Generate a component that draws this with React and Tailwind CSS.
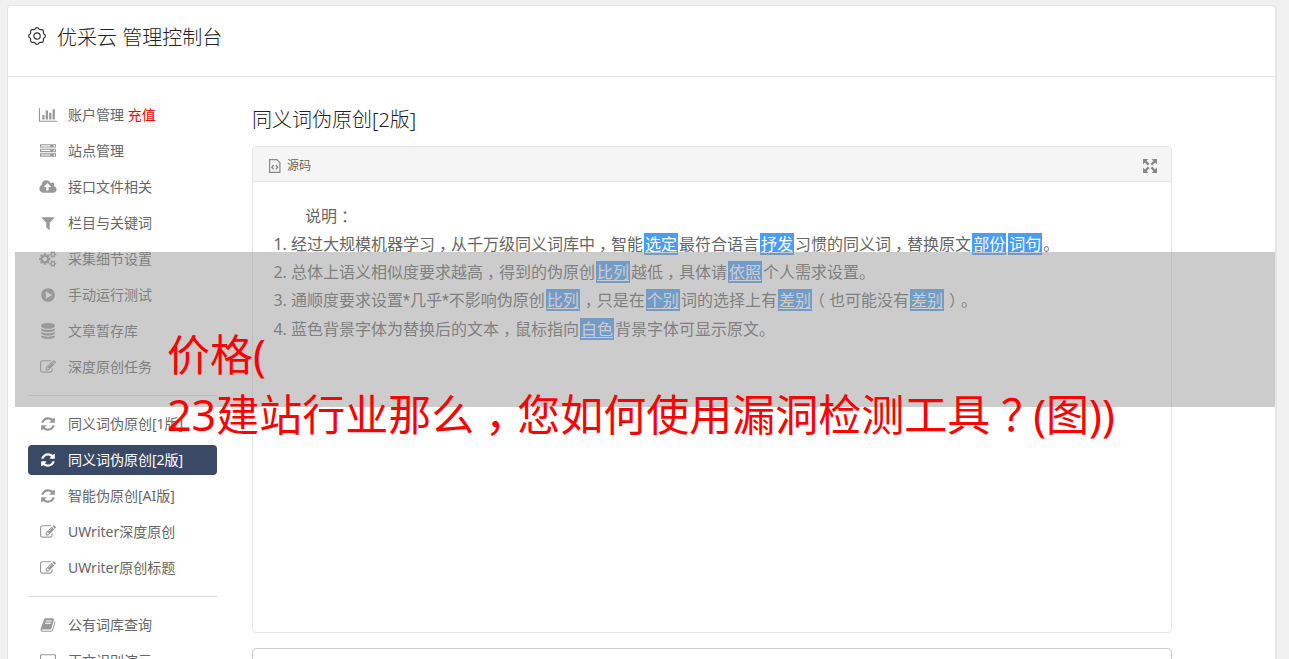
const PATHS = {
  chart: ['0 0 2048 1792', 'M640 896v512h-256v-512h256zm384-512v1024h-256v-1024h256zm1024 1152v128h-2048v-1536h128v1408h1920zm-640-896v768h-256v-768h256zm384-384v1152h-256v-1152h256z'],
  server: ['0 0 1792 1792', 'M128 1408h1024v-128h-1024v128zm0-512h1024v-128h-1024v128zm1568 448q0-40-28-68t-68-28-68 28-28 68 28 68 68 28 68-28 28-68zm-1568-960h1024v-128h-1024v128zm1568 448q0-40-28-68t-68-28-68 28-28 68 28 68 68 28 68-28 28-68zm0-512q0-40-28-68t-68-28-68 28-28 68 28 68 68 28 68-28 28-68zm96 832v384h-1792v-384h1792zm0-512v384h-1792v-384h1792zm0-512v384h-1792v-384h1792z'],
  cloud: ['-128 0 2048 1792', 'M1216 864q0-14-9-23l-352-352q-9-9-23-9t-23 9l-351 351q-10 12-10 24 0 14 9 23t23 9h224v352q0 13 9.5 22.5t22.5 9.5h192q13 0 22.5-9.5t9.5-22.5v-352h224q13 0 22.5-9.5t9.5-22.5zm640 288q0 159-112.5 271.5t-271.5 112.5h-1088q-185 0-316.5-131.5t-131.5-316.5q0-130 70-240t188-165q-2-30-2-43 0-212 150-362t362-150q156 0 285.5 87t188.5 231q71-62 166-62 106 0 181 75t75 181q0 76-41 138 130 31 213.5 135.5t83.5 238.5z'],
  filter: ['0 0 1792 1792', 'M1595 295q17 41-14 70l-493 493v742q0 42-39 59-13 5-25 5-27 0-45-19l-256-256q-19-19-19-45v-486l-493-493q-31-29-14-70 17-39 59-39h1280q42 0 59 39z'],
  cogs: ['-96 0 2048 1792', 'M832 896q0-106-75-181t-181-75-181 75-75 181 75 181 181 75 181-75 75-181zm768 512q0-52-38-90t-90-38-90 38-38 90q0 53 37.5 90.5t90.5 37.5 90.5-37.5 37.5-90.5zm0-1024q0-52-38-90t-90-38-90 38-38 90q0 53 37.5 90.5t90.5 37.5 90.5-37.5 37.5-90.5zm-384 421v185q0 10-7 19.5t-16 10.5l-155 24q-11 35-32 76 34 48 90 115 7 11 7 20 0 12-7 19-23 30-82.5 89.5t-78.5 59.5q-11 0-21-7l-115-90q-37 19-77 31-11 108-23 155-7 24-30 24h-186q-11 0-20-7.5t-10-17.5l-23-153q-34-10-75-31l-118 89q-7 7-20 7-11 0-21-8-144-133-144-160 0-9 7-19 10-14 41-53t47-61q-23-44-35-82l-152-24q-10-1-17-9.5t-7-19.5v-185q0-10 7-19.5t16-10.5l155-24q11-35 32-76-34-48-90-115-7-11-7-20 0-12 7-20 22-30 82-89t79-59q11 0 21 7l115 90q34-18 77-32 11-108 23-154 7-24 30-24h186q11 0 20 7.5t10 17.5l23 153q34 10 75 31l118-89q8-7 20-7 11 0 21 8 144 133 144 160 0 8-7 19-12 16-42 54t-45 60q23 48 34 82l152 23q10 2 17 10.5t7 19.5zm640 533v140q0 16-149 31-12 27-30 52 51 113 51 138 0 4-4 7-122 71-124 71-8 0-46-47t-52-68q-20 2-30 2t-30-2q-14 21-52 68t-46 47q-2 0-124-71-4-3-4-7 0-25 51-138-18-25-30-52-149-15-149-31v-140q0-16 149-31 13-29 30-52-51-113-51-138 0-4 4-7 4-2 35-20t59-34 30-16q8 0 46 46.5t52 67.5q20-2 30-2t30 2q51-71 92-112l6-2q4 0 124 70 4 3 4 7 0 25-51 138 17 23 30 52 149 15 149 31zm0-1024v140q0 16-149 31-12 27-30 52 51 113 51 138 0 4-4 7-122 71-124 71-8 0-46-47t-52-68q-20 2-30 2t-30-2q-14 21-52 68t-46 47q-2 0-124-71-4-3-4-7 0-25 51-138-18-25-30-52-149-15-149-31v-140q0-16 149-31 13-29 30-52-51-113-51-138 0-4 4-7 4-2 35-20t59-34 30-16q8 0 46 46.5t52 67.5q20-2 30-2t30 2q51-71 92-112l6-2q4 0 124 70 4 3 4 7 0 25-51 138 17 23 30 52 149 15 149 31z'],
  play: ['0 0 1792 1792', 'M896 128q209 0 385.5 103t279.5 279.5 103 385.5-103 385.5-279.5 279.5-385.5 103-385.5-103-279.5-279.5-103-385.5 103-385.5 279.5-279.5 385.5-103zm384 823q32-18 32-55t-32-55l-544-320q-31-19-64-1-32 19-32 56v640q0 37 32 56 16 8 32 8 17 0 32-9z'],
  database: ['0 0 1792 1792', 'M896 768q237 0 443-43t325-127v170q0 69-103 128t-280 93.5-385 34.5-385-34.5-280-93.5-103-128v-170q119 84 325 127t443 43zm0 768q237 0 443-43t325-127v170q0 69-103 128t-280 93.5-385 34.5-385-34.5-280-93.5-103-128v-170q119 84 325 127t443 43zm0-384q237 0 443-43t325-127v170q0 69-103 128t-280 93.5-385 34.5-385-34.5-280-93.5-103-128v-170q119 84 325 127t443 43zm0-1152q208 0 385 34.5t280 93.5 103 128v128q0 69-103 128t-280 93.5-385 34.5-385-34.5-280-93.5-103-128v-128q0-69 103-128t280-93.5 385-34.5z'],
  edit: ['0 0 1792 1792', 'M888 1184l116-116-152-152-116 116v56h96v96h56zm440-720q-16-16-33 1l-350 350q-17 17-1 33t33-1l350-350q17-17 1-33zm80 594v190q0 119-84.5 203.5t-203.5 84.5h-832q-119 0-203.5-84.5t-84.5-203.5v-832q0-119 84.5-203.5t203.5-84.5h832q63 0 117 25 15 7 18 23 3 17-9 29l-49 49q-14 14-32 8-23-6-45-6h-832q-66 0-113 47t-47 113v832q0 66 47 113t113 47h832q66 0 113-47t47-113v-126q0-13 9-22l64-64q15-15 35-7t20 29zm-96-738l288 288-672 672h-288v-288zm444 132l-92 92-288-288 92-92q28-28 68-28t68 28l152 152q28 28 28 68t-28 68z'],
  refresh: ['0 0 1792 1792', 'M1639 1056q0 5-1 7-64 268-268 434.5t-478 166.5q-146 0-282.5-55t-243.5-157l-129 129q-19 19-45 19t-45-19-19-45v-448q0-26 19-45t45-19h448q26 0 45 19t19 45-19 45l-137 137q71 66 161 102t187 36q134 0 250-65t186-179q11-17 53-117 8-23 30-23h192q13 0 22.5 9.5t9.5 22.5zm25-800v448q0 26-19 45t-45 19h-448q-26 0-45-19t-19-45 19-45l138-138q-148-137-349-137-134 0-250 65t-186 179q-11 17-53 117-8 23-30 23h-199q-13 0-22.5-9.5t-9.5-22.5v-7q65-268 270-434.5t480-166.5q146 0 284 55.5t245 156.5l130-129q19-19 45-19t45 19 19 45z'],
  book: ['0 0 1792 1792', 'M1703 478q40 57 18 129l-275 906q-19 64-76.5 107.5t-122.5 43.5h-923q-77 0-148.5-53.5t-99.5-131.5q-24-67-2-127 0-4 3-27t4-37q1-8-3-21.5t-3-19.5q2-11 8-21t16.5-23.5 16.5-23.5q23-38 45-91.5t30-91.5q3-10 .5-30t-.5-28q3-11 17-28t17-23q21-36 42-92t25-90q1-9-2.5-32t.5-28q4-13 22-30.5t22-22.5q19-26 42.5-84.5t27.5-96.5q1-8-3-25.5t-2-26.5q2-8 9-18t18-23 17-21q8-12 16.5-30.5t15-35 16-36 19.5-32 26.5-23.5 36-11.5 47.5 5.5l-1 3q38-9 51-9h761q74 0 114 56t18 130l-274 906q-36 119-71.5 153.5t-128.5 34.5h-869q-27 0-38 15-11 16-1 43 24 70 144 70h923q29 0 56-15.5t35-41.5l300-987q7-22 5-57 38 15 59 43zm-1064 2q-4 13 2 22.5t20 9.5h608q13 0 25.5-9.5t16.5-22.5l21-64q4-13-2-22.5t-20-9.5h-608q-13 0-25.5 9.5t-16.5 22.5zm-83 256q-4 13 2 22.5t20 9.5h608q13 0 25.5-9.5t16.5-22.5l21-64q4-13-2-22.5t-20-9.5h-608q-13 0-25.5 9.5t-16.5 22.5z'],
  laptop: ['0 0 2048 1792', 'M288 128h1472q66 0 113 47t47 113v960q0 66-47 113t-113 47h-1472q-66 0-113-47t-47-113v-960q0-66 47-113t113-47zm0 128q-32 0-32 32v960q0 32 32 32h1472q32 0 32-32v-960q0-32-32-32zM640 1536h768v128h-768z'],
}

function Icon({ name }) {
  const [viewBox, d] = PATHS[name]
  return (
    <svg viewBox={viewBox} className="h-4 w-5 shrink-0" fill="currentColor" aria-hidden="true">
      <path d={d} />
    </svg>
  )
}

// Outline of a cog with eight soft teeth.
const GEAR = Array.from({ length: 96 }, (_, i) => {
  const a = (i / 96) * Math.PI * 2
  const r = 7.7 + 0.65 * Math.cos(8 * a)
  return `${(9 + r * Math.cos(a)).toFixed(2)} ${(9 + r * Math.sin(a)).toFixed(2)}`
}).join('L')

function GearIcon() {
  return (
    <svg viewBox="0 0 18 18" className="size-[18px] shrink-0" fill="none" stroke="currentColor" strokeWidth="1.2" strokeLinejoin="round" aria-hidden="true">
      <circle cx="9" cy="9" r="3.2" />
      <path d={`M${GEAR}Z`} />
    </svg>
  )
}

function FileCodeIcon() {
  return (
    <svg viewBox="0 0 12 14" className="h-[14px] w-3 shrink-0 text-[#888]" fill="none" stroke="currentColor" aria-hidden="true">
      <path d="M.6 .6H7.8L10.9 3.7V13.4H.6Z" strokeWidth="1.2" />
      <path d="M4.7 6L2.9 8.2L4.7 10.4M6.8 6L8.6 8.2L6.8 10.4" strokeWidth="1.4" />
    </svg>
  )
}

function ExpandIcon() {
  return (
    <svg viewBox="0 0 14 14" className="size-[14px]" fill="currentColor" stroke="currentColor" aria-hidden="true">
      <path stroke="none" d="M0 0H5.4L0 5.4ZM14 0V5.4L8.6 0ZM0 14V8.6L5.4 14ZM14 14H8.6L14 8.6Z" />
      <path strokeWidth="2.4" d="M2 2L5.6 5.6M12 2L8.4 5.6M2 12L5.6 8.4M12 12L8.4 8.4" />
    </svg>
  )
}

// Full-width punctuation is set centred in its cell.
function Zh({ children }) {
  return children.split(/([，：（）？])/).map((part, i) =>
    i % 2 ? (
      <span key={i} className="inline-block w-[1em] text-center indent-0 [font-feature-settings:'halt']">{part}</span>
    ) : (
      part
    ),
  )
}

const ACCOUNT = [
  { icon: 'chart', label: '账户管理', note: '充值' },
  { icon: 'server', label: '站点管理' },
  { icon: 'cloud', label: '接口文件相关' },
  { icon: 'filter', label: '栏目与关键词' },
  { icon: 'cogs', label: '采集细节设置' },
  { icon: 'play', label: '手动运行测试' },
  { icon: 'database', label: '文章暂存库' },
  { icon: 'edit', label: '深度原创任务' },
]
const REWRITE = [
  { icon: 'refresh', label: '同义词伪原创[1版]' },
  { icon: 'refresh', label: '同义词伪原创[2版]', active: true },
  { icon: 'refresh', label: '智能伪原创[AI版]' },
  { icon: 'edit', label: 'UWriter深度原创' },
  { icon: 'edit', label: 'UWriter原创标题' },
]
const TOOLS = [
  { icon: 'book', label: '公有词库查询' },
  { icon: 'laptop', label: '正文识别演示' },
]

function NavGroup({ items }) {
  return (
    <ul className="flex flex-col gap-1.5">
      {items.map((item) => (
        <li key={item.label}>
          <a
            href="#"
            aria-current={item.active ? 'page' : undefined}
            className={
              item.active
                ? 'flex h-[30px] items-center gap-2.5 rounded bg-[#3a4a66] px-2.5 text-sm text-white'
                : 'flex h-[30px] items-center gap-2.5 px-2.5 text-sm text-[#666]'
            }
          >
            <span className={item.active ? 'text-white' : 'text-[#999]'}>
              <Icon name={item.icon} />
            </span>
            <span>
              {item.label}
              {item.note && <span className="text-[#f00]"> {item.note}</span>}
            </span>
          </a>
        </li>
      ))}
    </ul>
  )
}

function Word({ children }) {
  return (
    <a href="#" className="mx-px bg-[#4b9cf4] px-px text-white underline underline-offset-2">
      {children}
    </a>
  )
}

function Star() {
  return <span className="font-['Roboto',sans-serif]">*</span>
}

export default function App() {
  return (
    <div className="h-screen overflow-hidden bg-[#f1f1f1] pt-[5px] pr-3 pl-[7px] font-['Noto_Sans','Noto_Sans_CJK_SC',sans-serif] text-[#333]">
      <div className="relative min-h-full rounded-t border border-r-2 border-[#e5e5e5] bg-white">
        <header className="flex h-[71px] items-start gap-[11px] border-b border-[#e5e5e5] px-5 pt-4">
          <span className="flex h-7 items-center">
            <GearIcon />
          </span>
          <h1 className="text-xl leading-8 font-light text-[#222]">优采云 管理控制台</h1>
        </header>

        <div className="flex gap-[35px] pt-[23px] pr-[103px] pl-5">
          <nav className="w-[189px] shrink-0">
            <NavGroup items={ACCOUNT} />
            <hr className="my-[13px] border-[#ddd]" />
            <NavGroup items={REWRITE} />
            <hr className="my-[13px] border-[#ddd]" />
            <NavGroup items={TOOLS} />
          </nav>

          <main className="min-w-0 flex-1 pt-1">
            <h2 className="text-xl leading-8 font-light text-[#222]">同义词伪原创[2版]</h2>
            <section className="mt-2.5 rounded border border-[#e5e5e5]">
              <div className="flex h-[35px] items-center justify-between border-b border-[#e5e5e5] bg-[#f5f5f5] pt-1 pr-3.5 pl-4">
                <h3 className="flex items-center gap-1.5 text-xs font-light text-[#222]">
                  <FileCodeIcon />
                  源码
                </h3>
                <button type="button" aria-label="全屏" className="text-[#888]">
                  <ExpandIcon />
                </button>
              </div>
              <div className="min-h-[450px] p-5 text-base leading-7 text-[#666]">
                <p className="indent-8"><Zh>说明：</Zh></p>
                <ol className="list-decimal pl-[18px]">
                  <li>
                    <Zh>经过大规模机器学习，从千万级同义词库中，智能</Zh>
                    <Word>选定</Word>最符合语言<Word>抒发</Word>
                    <Zh>习惯的同义词，替换原文</Zh>
                    <Word>部份</Word>
                    <Word>词句</Word>。
                  </li>
                  <li>
                    <Zh>总体上语义相似度要求越高，得到的伪原创</Zh>
                    <Word>比列</Word>
                    <Zh>越低，具体请</Zh>
                    <Word>依照</Word>个人需求设置。
                  </li>
                  <li>
                    通顺度要求设置<Star />几乎<Star />不影响伪原创<Word>比列</Word>
                    <Zh>，只是在</Zh>
                    <Word>个别</Word>词的选择上有<Word>差别</Word>
                    <Zh>（也可能没有</Zh>
                    <Word>差别</Word>
                    <Zh>）。</Zh>
                  </li>
                  <li>
                    <Zh>蓝色背景字体为替换后的文本，鼠标指向</Zh>
                    <Word>白色</Word>背景字体可显示原文。
                  </li>
                </ol>
              </div>
            </section>
            <section className="mt-[15px] h-40 rounded border border-[#ccc]" />
          </main>
        </div>

        <div className="absolute top-[246px] right-0 left-[7px] h-[155px] bg-[#999]/50 pt-[73px] pl-[152px] text-[43px] leading-[60px] whitespace-nowrap text-[#f00]">
          <p>价格(</p>
          <p><Zh>23建站行业那么，您如何使用漏洞检测工具？(图))</Zh></p>
        </div>
      </div>
    </div>
  )
}
